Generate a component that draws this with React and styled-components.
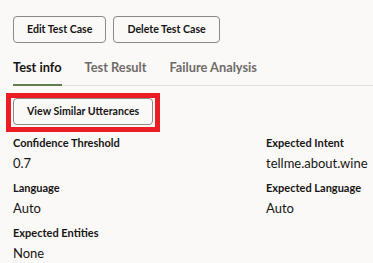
import React from "react";
import styled, { createGlobalStyle } from "styled-components";

const Global = createGlobalStyle`
  html, body { margin: 0; padding: 0; background: #fbf9f8; }
  body { font-family: Lato, "Noto Sans", sans-serif; color: #161513; }
`;

const Page = styled.div`
  display: flex;
  flex-direction: column;
  align-items: flex-start;
  padding: 16px 0 0 13px;
  width: 373px;
  height: 263px;
  box-sizing: border-box;
  overflow: hidden;
`;

const Toolbar = styled.div`
  display: flex;
  gap: 7px;
`;

const Button = styled.button`
  height: 27px;
  padding: 0 13px;
  border: 1px solid #8c8884;
  border-radius: 4px;
  background: #fbf9f8;
  color: #161513;
  font-family: inherit;
  font-size: 10.6px;
  font-weight: 700;
  line-height: 1;
  cursor: pointer;
`;

const TabList = styled.div`
  display: flex;
  gap: 23px;
  margin-top: 7px;
  border-bottom: 1px solid #e4e1dd;
  width: 360px;
`;

const Tab = styled.div`
  padding: 8px 0 8px;
  line-height: 18px;
  font-size: 12.8px;
  font-weight: 700;
  color: ${(p) => (p.$active ? "#161513" : "#6f6c69")};
  border-bottom: 2px solid ${(p) => (p.$active ? "#5f7d4f" : "transparent")};
  margin-bottom: -1px;
`;

const Highlight = styled.div`
  position: relative;
  display: flex;
  margin-top: 12px;
`;

const RedFrame = styled.span`
  position: absolute;
  left: -7px;
  top: -5px;
  right: -7px;
  bottom: -7px;
  border: 5px solid #ea1c24;
  pointer-events: none;
`;

const Details = styled.div`
  display: grid;
  grid-template-columns: 253px 1fr;
  row-gap: 7px;
  margin-top: 10px;
  width: 360px;
`;

const Field = styled.div`
  display: flex;
  flex-direction: column;
  gap: 2px;
`;

const Label = styled.div`
  font-size: 11px;
  line-height: 16px;
  font-weight: 700;
  color: #161513;
`;

const Value = styled.div`
  font-size: 13px;
  line-height: 20px;
  color: #161513;
`;

const fields = [
  ["Confidence Threshold", "0.7"],
  ["Expected Intent", "tellme.about.wine"],
  ["Language", "Auto"],
  ["Expected Language", "Auto"],
  ["Expected Entities", "None"],
];

export default function App() {
  return (
    <>
      <Global />
      <Page>
        <Toolbar>
          <Button>Edit Test Case</Button>
          <Button>Delete Test Case</Button>
        </Toolbar>
        <TabList>
          <Tab $active>Test info</Tab>
          <Tab>Test Result</Tab>
          <Tab>Failure Analysis</Tab>
        </TabList>
        <Highlight>
          <Button>View Similar Utterances</Button>
          <RedFrame />
        </Highlight>
        <Details>
          {fields.map(([l, v]) => (
            <Field key={l}>
              <Label>{l}</Label>
              <Value>{v}</Value>
            </Field>
          ))}
        </Details>
      </Page>
    </>
  );
}
